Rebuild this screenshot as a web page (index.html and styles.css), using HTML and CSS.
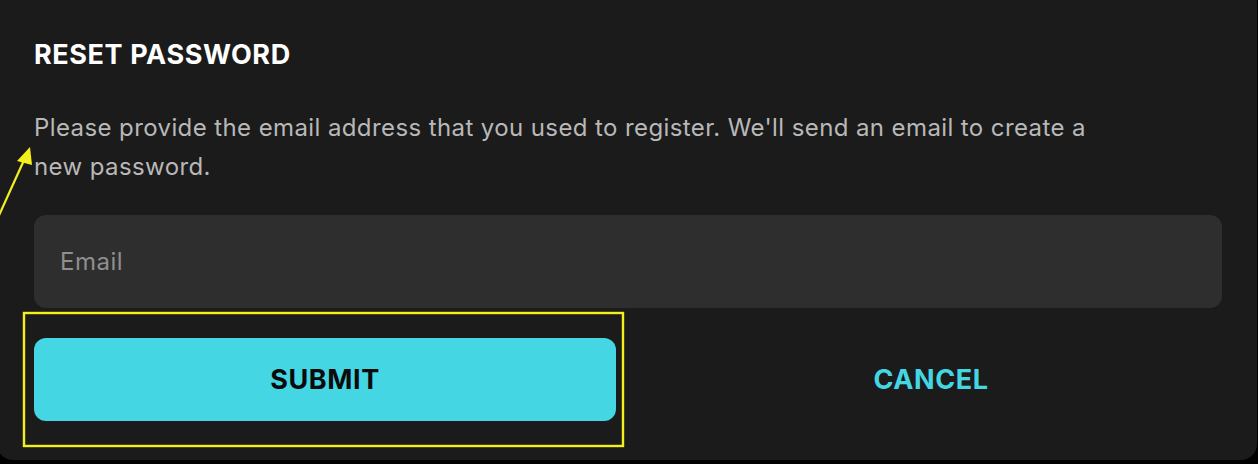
FILE: index.html
```html
<!DOCTYPE html>
<html lang="en">
<head>
<meta charset="utf-8">
<title>Reset password</title>
<link rel="stylesheet" href="styles.css">
</head>
<body>
<div class="modal">
  <h2 class="title">RESET PASSWORD</h2>
  <p class="desc">Please provide the email address that you used to register. We'll send an email to create a new password.</p>
  <form class="form">
    <input class="field" type="email" placeholder="Email">
    <div class="actions">
      <button type="button" class="btn btn-primary">SUBMIT</button>
      <button type="button" class="btn btn-link">CANCEL</button>
    </div>
  </form>
</div>
<svg class="annot" width="1258" height="464" viewBox="0 0 1258 464" aria-hidden="true">
  <line x1="-4" y1="222" x2="25" y2="158" stroke="#f4f01c" stroke-width="2.2"/>
  <polygon points="30,147 17,161 32,165" fill="#f4f01c"/>
  <rect x="24" y="313" width="599" height="133" fill="none" stroke="#f4f01c" stroke-width="2.4"/>
</svg>
</body>
</html>
```
FILE: styles.css
```css
html, body {
  margin: 0;
  padding: 0;
  background: #000;
  height: 464px;
  overflow: hidden;
}

body {
  position: relative;
  font-family: Inter, "Noto Sans", "Liberation Sans", sans-serif;
}

.modal {
  margin: -14px 0 0 -3px;
  width: 1260px;
  height: 474px;
  box-sizing: border-box;
  background: #1b1b1b;
  border-radius: 16px;
  padding: 53px 0 0 37px;
}

.title {
  margin: 0;
  font-size: 27px;
  line-height: 32px;
  font-weight: 700;
  color: #ffffff;
  letter-spacing: 0.6px;
}

.desc {
  margin: 38px 0 0;
  max-width: 1085px;
  font-size: 24px;
  line-height: 38.5px;
  letter-spacing: 0.4px;
  color: #b8b8b8;
}

.form {
  margin-top: 29px;
  width: 1188px;
  display: flex;
  flex-direction: column;
  gap: 30px;
}

.field {
  height: 93px;
  box-sizing: border-box;
  border: none;
  outline: none;
  border-radius: 12px;
  background: #2e2e2e;
  padding: 0 26px;
  font-family: inherit;
  font-size: 24px;
  letter-spacing: 0.5px;
  color: #fff;
}

.field::placeholder {
  color: #8f8f8f;
}

.actions {
  display: grid;
  grid-template-columns: 1fr 1fr;
  gap: 24px;
}

.btn {
  height: 83px;
  border: none;
  border-radius: 12px;
  font-family: inherit;
  font-size: 27px;
  font-weight: 700;
  letter-spacing: 0.6px;
  cursor: pointer;
}

.btn-primary {
  background: #44d6e3;
  color: #0b0b0b;
}

.btn-link {
  background: transparent;
  color: #44d6e3;
}

.annot {
  position: absolute;
  left: 0;
  top: 0;
  pointer-events: none;
}
```
